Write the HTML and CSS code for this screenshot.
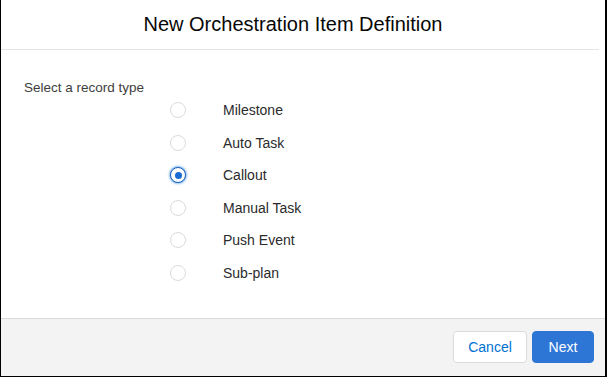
FILE: index.html
```html
<!DOCTYPE html>
<html>
<head>
    <title>New Orchestration Item Definition</title>
    <link rel="stylesheet" href="styles.css">
</head>
<body>
<div class="modal">
    <div class="modal-header">
        <h2>New Orchestration Item Definition</h2>
    </div>
    <div class="modal-body">
        <div class="field-label">Select a record type</div>
        <div class="radio-list">
            <label class="radio-row"><span class="radio"></span><span class="radio-label">Milestone</span></label>
            <label class="radio-row"><span class="radio"></span><span class="radio-label">Auto Task</span></label>
            <label class="radio-row"><span class="radio checked"></span><span class="radio-label">Callout</span></label>
            <label class="radio-row"><span class="radio"></span><span class="radio-label">Manual Task</span></label>
            <label class="radio-row"><span class="radio"></span><span class="radio-label">Push Event</span></label>
            <label class="radio-row"><span class="radio"></span><span class="radio-label">Sub-plan</span></label>
        </div>
    </div>
    <div class="modal-footer">
        <button type="button" class="cancel-btn">Cancel</button>
        <button type="button" class="next-btn">Next</button>
    </div>
</div>
</body>
</html>
```

FILE: styles.css
```css
body {
    margin: 0;
    font-family: "Liberation Sans", Arial, sans-serif;
    color: #080707;
}
.modal {
    width: 607px;
    height: 377px;
    box-sizing: border-box;
    border-left: 1px solid #000;
    border-right: 2px solid #000;
    border-bottom: 1px solid #000;
    background: #fff;
    display: flex;
    flex-direction: column;
}
.modal-header {
    height: 49px;
    margin-right: 6px;
    padding-right: 14px;
    border-bottom: 1px solid #e5e5e5;
    display: flex;
    align-items: center;
    justify-content: center;
}
.modal-header h2 {
    margin: 0;
    font-size: 20px;
    font-weight: normal;
    color: #080707;
}
.modal-body {
    flex: 1;
    padding: 31px 0 0 23px;
}
.field-label {
    font-size: 13.5px;
    line-height: 14px;
    color: #3e3e3c;
}
.radio-list {
    margin-top: -1px;
    padding-left: 146px;
}
.radio-row {
    height: 32.5px;
    display: flex;
    align-items: center;
}
.radio {
    width: 16px;
    height: 16px;
    box-sizing: border-box;
    border: 1px solid #dddbda;
    border-radius: 50%;
    background: #fff;
    margin-right: 37px;
    position: relative;
}
.radio.checked {
    border-color: #1b5fbf;
    box-shadow: 0 0 3px #0070d2;
}
.radio.checked::after {
    content: "";
    position: absolute;
    left: 3.5px;
    top: 3.5px;
    width: 7px;
    height: 7px;
    border-radius: 50%;
    background: #1b6ad2;
}
.radio-label {
    font-size: 14px;
    color: #2b2b2b;
}
.modal-footer {
    height: 58px;
    box-sizing: border-box;
    border-top: 1px solid #dddbda;
    background: #f3f3f3;
    display: flex;
    justify-content: flex-end;
    align-items: flex-start;
    padding: 12px 11px 0 0;
    gap: 5px;
}
button {
    height: 32px;
    border-radius: 4px;
    font-family: "Liberation Sans", Arial, sans-serif;
    font-size: 14px;
    cursor: pointer;
}
.cancel-btn {
    width: 74px;
    background: #fff;
    border: 1px solid #dddbda;
    color: #0070d2;
}
.next-btn {
    width: 62px;
    background: #2e76d6;
    border: 1px solid #2e76d6;
    color: #fff;
}
```
